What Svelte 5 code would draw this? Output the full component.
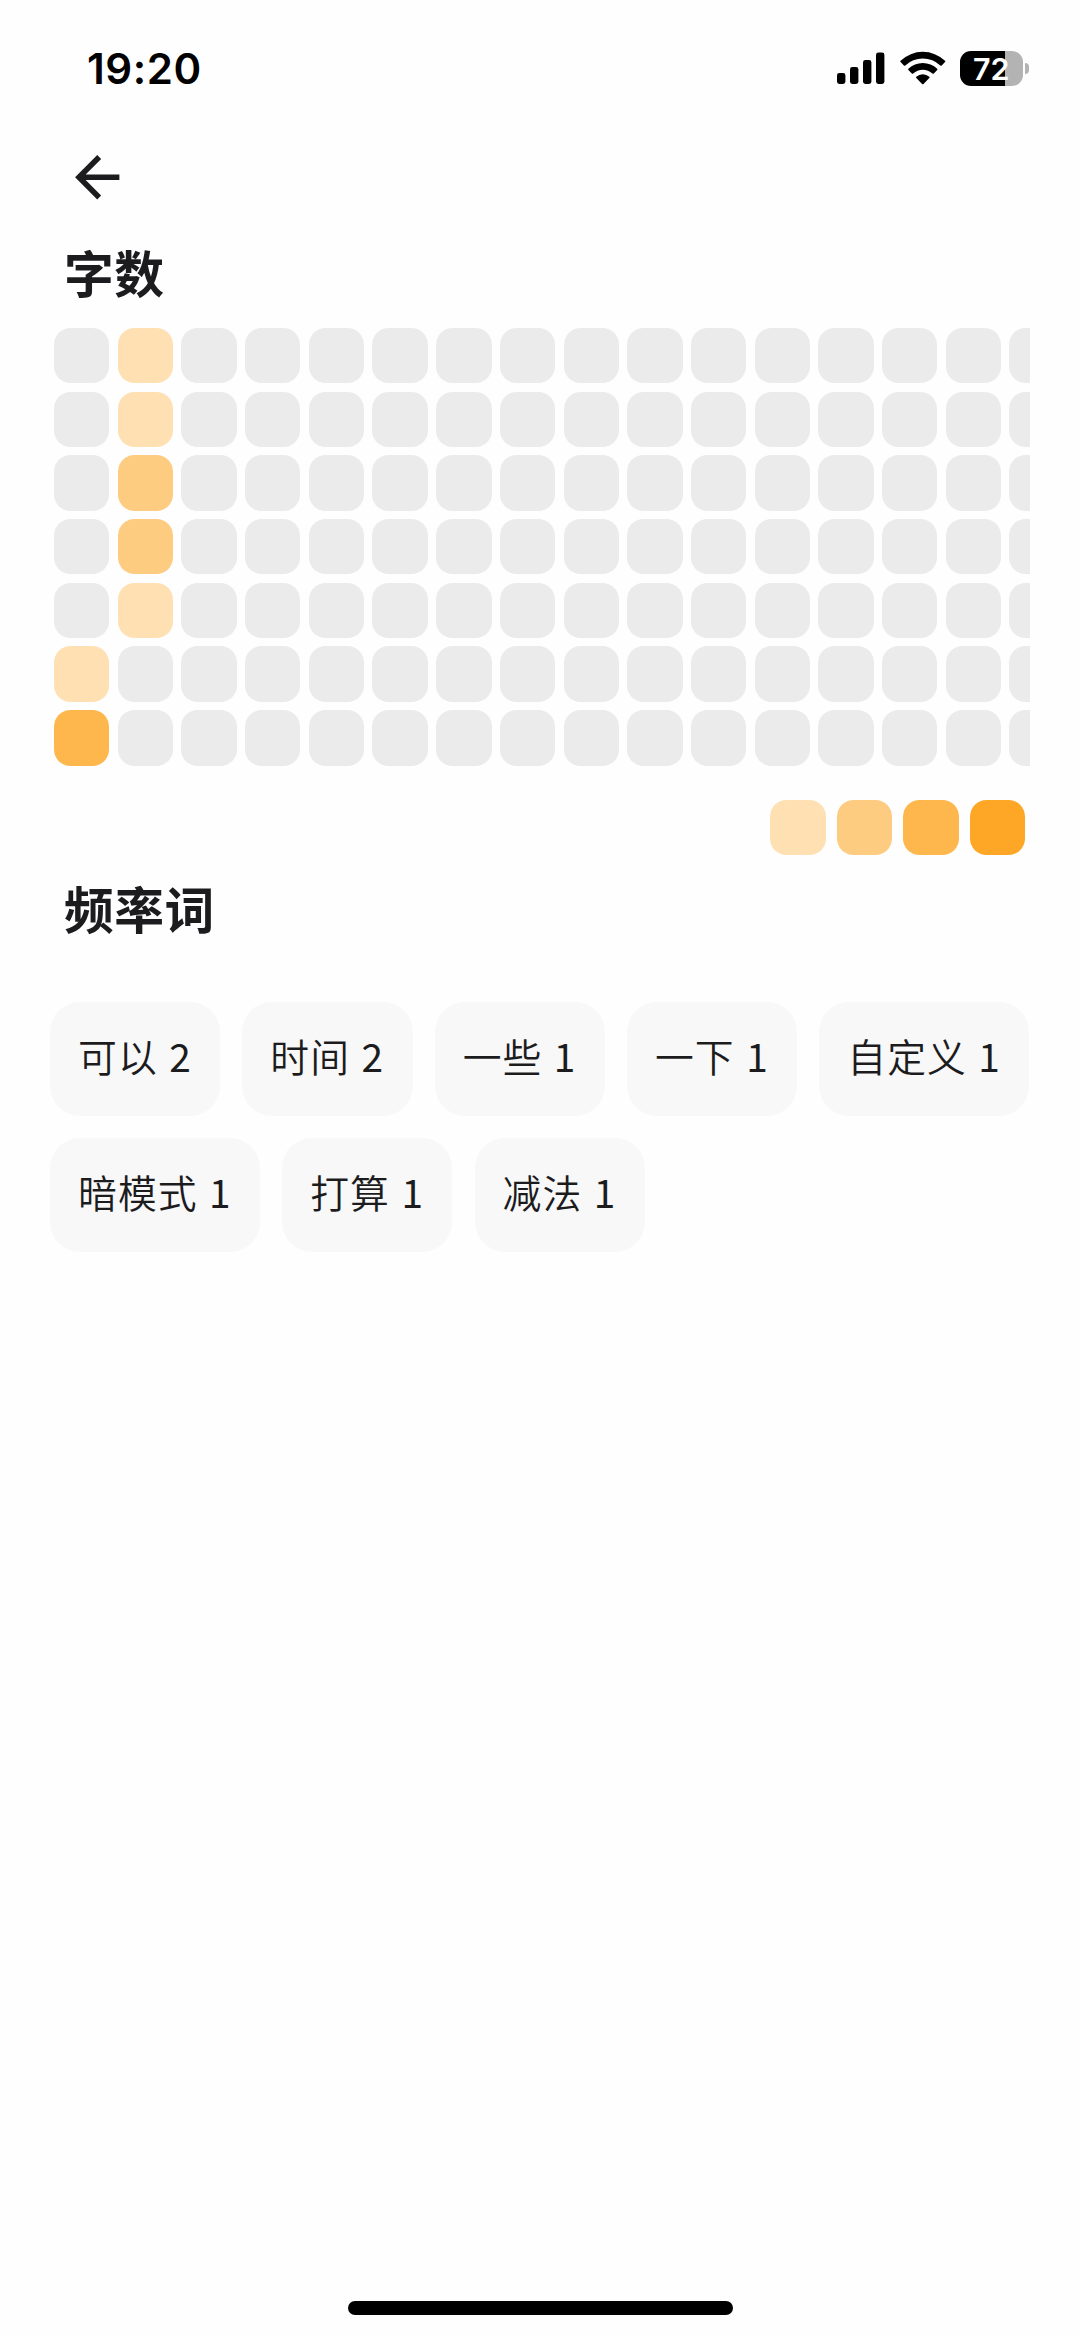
<script>
  const columns = 16;
  const rows = 7;

  // level 0 is an empty day, 1-4 follow the legend
  const levels = {
    "0-5": 1,
    "0-6": 3,
    "1-0": 1,
    "1-1": 1,
    "1-2": 2,
    "1-3": 2,
    "1-4": 1,
  };

  const days = Array.from({ length: columns * rows }, (_, i) => {
    const col = Math.floor(i / rows);
    return levels[`${col}-${i % rows}`] ?? 0;
  });

  const words = [
    { text: "可以", count: 2 },
    { text: "时间", count: 2 },
    { text: "一些", count: 1 },
    { text: "一下", count: 1 },
    { text: "自定义", count: 1 },
    { text: "暗模式", count: 1 },
    { text: "打算", count: 1 },
    { text: "减法", count: 1 },
  ];
</script>

<div class="screen">
  <header class="status">
    <span class="time">19:20</span>
    <div class="indicators">
      <svg class="signal" width="48" height="34" viewBox="0 0 48 34">
        <rect x="0" y="22" width="8.4" height="11" rx="2.4" />
        <rect x="13" y="16" width="8.4" height="17" rx="2.4" />
        <rect x="26" y="9" width="8.4" height="24" rx="2.4" />
        <rect x="39" y="1.5" width="8.4" height="31.5" rx="2.4" />
      </svg>
      <svg class="wifi" width="46" height="34" viewBox="0 0 46 34">
        <path d="M0.6 9.7a32.2 32.2 0 0 1 44.4 0a1 1 0 0 1 0 1.4l-3.3 3.4a1 1 0 0 1-1.4 0a25.4 25.4 0 0 0-35 0a1 1 0 0 1-1.4 0l-3.3-3.4a1 1 0 0 1 0-1.4z" />
        <path d="M8.4 17.7a20.8 20.8 0 0 1 28.8 0a1 1 0 0 1 0 1.4l-3.4 3.4a1 1 0 0 1-1.4 0a14 14 0 0 0-19.2 0a1 1 0 0 1-1.4 0l-3.4-3.4a1 1 0 0 1 0-1.4z" />
        <path d="M16.3 25.7a9.6 9.6 0 0 1 13 0a1 1 0 0 1 0 1.4l-5.8 5.8a1 1 0 0 1-1.4 0l-5.8-5.8a1 1 0 0 1 0-1.4z" />
      </svg>
      <div class="battery">
        <div class="body">72</div>
        <div class="cap"></div>
      </div>
    </div>
  </header>

  <nav>
    <svg width="66.46" height="66.46" viewBox="0 0 24 24">
      <path d="M20 11H7.83l5.59-5.59L12 4l-8 8 8 8 1.41-1.41L7.83 13H20z" />
    </svg>
  </nav>

  <main>
    <h2>字数</h2>
    <div class="heatmap">
      {#each days as level}
        <i class="cell l{level}"></i>
      {/each}
    </div>
    <div class="legend">
      {#each [1, 2, 3, 4] as level}
        <i class="cell l{level}"></i>
      {/each}
    </div>

    <h2 class="second">频率词</h2>
    <div class="words">
      {#each words as word}
        <div class="word">{word.text}<b>{word.count}</b></div>
      {/each}
    </div>
  </main>

  <footer><div class="home"></div></footer>
</div>

<style>
  :global(body) { background:#fefefe; }
  .screen { display:flex; flex-direction:column; width:1080px; height:2337px; overflow:hidden; background:#fefefe; color:#1c1c1e; font-family:"Noto Sans CJK SC", sans-serif; }

  .status { display:flex; justify-content:space-between; align-items:center; height:136px; padding:0 51px 0 87px; box-sizing:border-box; flex-shrink:0; color:#000; font-family:Inter, sans-serif; }
  .time { padding-top:2px; font-size:42px; font-weight:600; line-height:50px; letter-spacing:0.6px; }
  .indicators { display:flex; align-items:center; height:34px; }
  .wifi { margin:0 14.5px 0 15px; }
  .battery { display:flex; align-items:center; gap:2.5px; }
  .body { width:62.5px; height:35px; border-radius:11px; background:linear-gradient(to right, #000 72%, #b3b3b3 72%); color:#fff; font-size:30.5px; font-weight:600; line-height:36px; text-align:center; }
  .cap { width:4px; height:11px; border-radius:0 5px 5px 0; background:#b3b3b3; }

  nav { height:82px; padding:8px 64px 0; box-sizing:border-box; flex-shrink:0; }
  nav svg { display:block; fill:#1c1c1e; }

  main { padding:17px 50px 0; flex:1; }
  h2 { margin:0; padding-left:14px; height:72px; font-size:49.8px; font-weight:700; line-height:72px; letter-spacing:0.5px; }
  .heatmap { display:grid; grid-auto-flow:column; grid-template-rows:repeat(7, 55.4px); grid-auto-columns:55.4px; gap:8.3px; width:976px; margin:21px 0 0 4px; overflow:hidden; }
  .cell { display:block; width:55.4px; height:55.4px; border-radius:16.6px; }
  .l0 { background:#ebebeb; }
  .l1 { background:#fee0b2; }
  .l2 { background:#fecc80; }
  .l3 { background:#feb74d; }
  .l4 { background:#fea726; }
  .legend { display:flex; justify-content:flex-end; gap:11.1px; padding:34.5px 5px 0; }
  .second { margin-top:16px; }
  .words { display:flex; flex-wrap:wrap; gap:22.1px; margin:59px -10px 0 0; }
  .word { display:flex; height:113.5px; padding:0 28px; border-radius:30px; background:#f8f8f8; font-size:38.8px; font-weight:350; line-height:107px; letter-spacing:1.1px; }
  .word b { margin:0 0.4px 0 11.4px; font-weight:400; }

  footer { display:flex; justify-content:center; height:36px; flex-shrink:0; }
  .home { width:385px; height:14px; border-radius:7px; background:#000; }
</style>
